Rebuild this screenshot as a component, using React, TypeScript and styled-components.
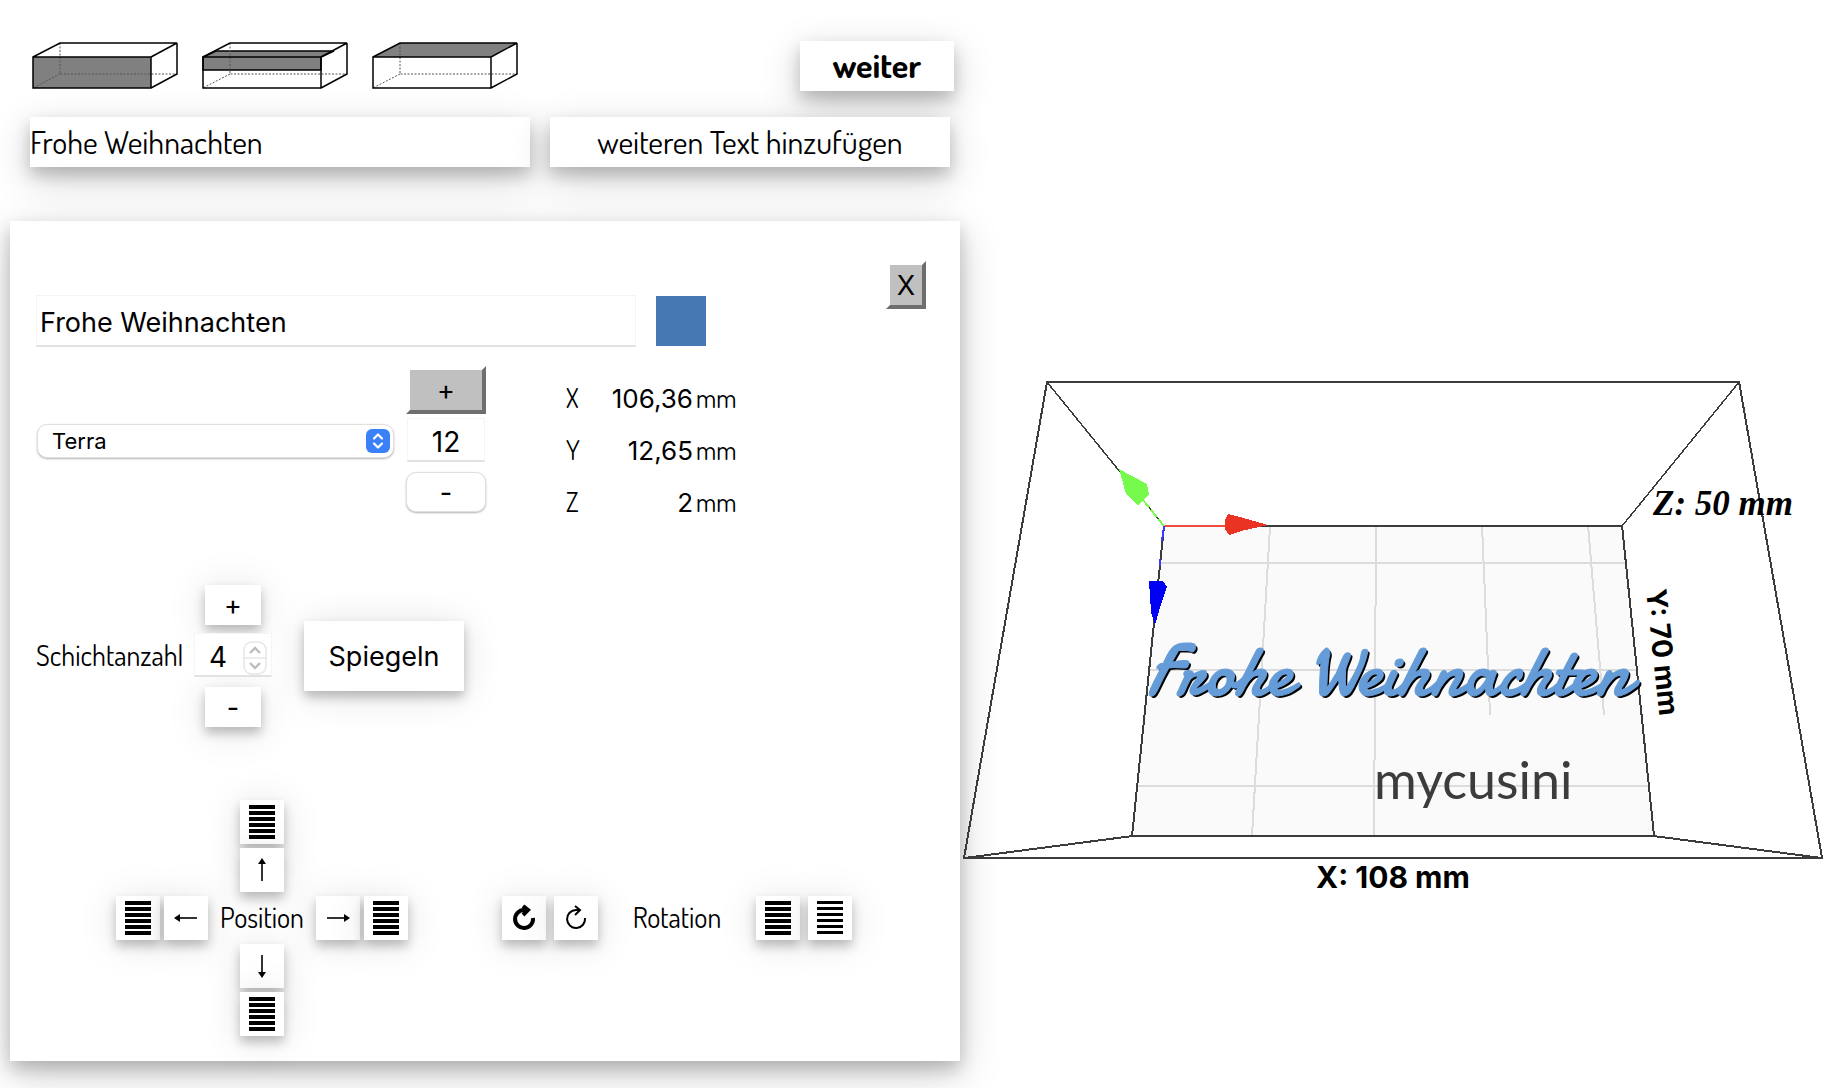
import React, { useState } from "react";
import styled, { createGlobalStyle, css } from "styled-components";

const display = `"Dosis", "Liberation Sans Narrow", "Lato", sans-serif`;
const system = `"Inter", "Liberation Sans", sans-serif`;
const script = `"Damion", "Yellowtail", "Kaushan Script", "Dancing Script", "Pacifico", "Satisfy", "Caveat", "Liberation Serif", serif`;
const wideShadow = "0 8px 16px rgba(0, 0, 0, 0.2), 0 12px 40px rgba(0, 0, 0, 0.19)";
const tightShadow = "0 6px 10px rgba(0, 0, 0, 0.24), 0 4px 40px rgba(0, 0, 0, 0.12)";

const GlobalStyle = createGlobalStyle`
  *, *::before, *::after { box-sizing: border-box; }
  body { margin: 0; background: #fff; color: #000; font-family: ${display}; }
  button, input, select { margin: 0; color: #000; }
  button { cursor: pointer; }
`;

const Page = styled.div`
  display: grid;
  grid-template-columns: minmax(0, 26fr) minmax(0, 24fr);
  align-items: start;
`;

const Editor = styled.main`
  padding: 41px 0 27px 10px;
`;

const Bar = styled.div`
  display: flex;
  align-items: flex-start;
  height: 50px;
  padding: 0 6px 0 20px;
`;

const Placements = styled.div`
  display: flex;
  gap: 22px;
`;

const PlacementButton = styled.button`
  width: 148px;
  height: 50px;
  padding: 0;
  border: 0;
  background: transparent;
  svg { display: block; }
`;

const FlatButton = styled.button`
  height: 50px;
  padding: 0 32px;
  border: 0;
  background: #fff;
  box-shadow: ${wideShadow};
  font: 400 32px/40px ${display};
`;

const NextButton = styled(FlatButton)`
  min-width: 154px;
  margin-left: auto;
  padding: 0 0 2px;
  font-weight: 700;
  font-size: 34px;
`;

const TextBar = styled.div`
  display: grid;
  grid-template-columns: 5fr 4fr;
  gap: 20px;
  margin: 26px 10px 54px 20px;
`;

const TextEntry = styled.input`
  min-width: 0;
  height: 50px;
  padding: 0 0 2px;
  border: 0;
  background: #fff;
  box-shadow: ${wideShadow};
  font: 400 32px/40px ${display};
`;

const Panel = styled.section`
  position: relative;
  padding: 40px 34px 25px 26px;
  background: #fff;
  box-shadow: ${wideShadow};
`;

const HeadRow = styled.div`
  display: flex;
  align-items: flex-start;
  gap: 20px;
  margin-bottom: 19px;
`;

const fieldBorder = css`
  border: 1px solid #f5f5f5;
  border-bottom: 2px solid #e2e2e2;
  background: #fff;
`;

const NameField = styled.input`
  flex: 0 1 600px;
  min-width: 0;
  height: 52px;
  margin-top: 34px;
  padding: 3px 3px 0;
  ${fieldBorder}
  font: 400 27px/36px ${system};
`;

const Swatch = styled.input`
  appearance: none;
  width: 50px;
  height: 50px;
  margin-top: 35px;
  padding: 0;
  border: 0;
  background: #4679b3;
  &::-webkit-color-swatch-wrapper { padding: 0; }
  &::-webkit-color-swatch { border: 0; border-radius: 0; }
`;

const RaisedButton = styled.button<{ $width: number }>`
  width: ${(p) => p.$width}px;
  height: 48px;
  padding: 2px 0 0;
  border: 4px solid;
  border-color: #fff #6e6e6e #6e6e6e #fff;
  background: #c0c0c0;
  font: 400 27px/32px ${system};
`;

const CloseButton = styled(RaisedButton)`
  margin-left: auto;
`;

const FontRow = styled.div`
  display: flex;
  align-items: flex-start;
  margin-bottom: 68px;
`;

const SelectBox = styled.div`
  position: relative;
  width: 357px;
  margin: 58px 12px 0 1px;
  svg {
    position: absolute;
    top: 5px;
    right: 4px;
    pointer-events: none;
  }
`;

const FontSelect = styled.select`
  appearance: none;
  display: block;
  width: 100%;
  height: 34px;
  padding: 0 40px 0 14px;
  border: 1px solid #e0e0e0;
  border-radius: 10px;
  background: #fff;
  box-shadow: 0 1px 2px rgba(0, 0, 0, 0.3);
  font: 400 22px/28px ${system};
`;

const Stepper = styled.div<{ $gap: number; $width: number }>`
  display: flex;
  flex-direction: column;
  align-items: center;
  width: ${(p) => p.$width}px;
  & > :nth-child(2) { margin: ${(p) => p.$gap}px 0 10px; }
`;

const NumberBox = styled.div`
  position: relative;
  width: 78px;
  svg {
    position: absolute;
    top: 8px;
    right: 5px;
    pointer-events: none;
  }
`;

const NumberField = styled.input<{ $spinner?: boolean }>`
  appearance: textfield;
  display: block;
  width: 78px;
  height: 44px;
  padding: ${(p) => (p.$spinner ? "4px 30px 0 0" : "4px 0 0")};
  ${fieldBorder}
  font: 400 28px/36px ${system};
  text-align: center;
  &::-webkit-inner-spin-button { display: none; }
`;

const RoundButton = styled.button`
  width: 80px;
  height: 40px;
  padding: 2px 0 0;
  border: 1px solid #e0e0e0;
  border-radius: 10px;
  background: #fff;
  box-shadow: 0 1px 2px rgba(0, 0, 0, 0.3);
  font: 400 27px/32px ${system};
`;

const Dimensions = styled.div`
  display: grid;
  gap: 20px;
  padding: 15px 0 0 80px;
`;

const Dimension = styled.label`
  display: grid;
  grid-template-columns: 26px 100px auto;
  column-gap: 2px;
  align-items: center;
  height: 32px;
  font: 400 26px/32px ${display};
`;

const DimensionValue = styled.input`
  width: 100px;
  padding: 2px 1px 0 0;
  border: 0;
  background: transparent;
  font: 400 26px/32px ${system};
  text-align: right;
`;

const LayerRow = styled.div`
  display: flex;
  align-items: center;
  margin-bottom: 73px;
`;

const LayerLabel = styled.label`
  flex: 0 0 158px;
  padding-bottom: 2px;
  font: 400 28px/36px ${display};
  white-space: nowrap;
`;

const ShadowButton = styled.button<{ $width: number; $height: number }>`
  width: ${(p) => p.$width}px;
  height: ${(p) => p.$height}px;
  padding: 2px 0 0;
  border: 0;
  background: #fff;
  box-shadow: ${tightShadow};
  font: 400 27px/32px ${system};
`;

const MirrorButton = styled(ShadowButton)`
  margin-left: 32px;
`;

const MoveRow = styled.div`
  display: flex;
  align-items: center;
  gap: 94px;
  padding-left: 80px;
`;

const Pad = styled.div`
  display: grid;
  grid-template-columns: 44px 44px 100px 44px 44px;
  grid-template-rows: repeat(5, 44px);
  gap: 4px;
  place-items: center;
`;

const PadLabel = styled.span`
  grid-area: 3 / 3;
  padding-bottom: 2px;
  font: 400 28px/36px ${display};
`;

const IconButton = styled.button<{ $area?: string }>`
  ${(p) => p.$area && `grid-area: ${p.$area};`}
  width: 44px;
  height: 44px;
  padding: 0;
  border: 0;
  background: #fff;
  box-shadow: ${tightShadow};
  svg { display: block; }
`;

const RotationRow = styled.div`
  display: flex;
  gap: 8px;
  align-items: center;
`;

const RotationLabel = styled.span`
  width: 142px;
  padding-bottom: 2px;
  font: 400 28px/36px ${display};
  text-align: center;
`;

const Scene = styled.svg`
  display: block;
  width: 100%;
  height: auto;
  position: relative;
`;

type Side = "front" | "middle" | "top";

function BoxIcon({ side }: { side: Side }) {
  return (
    <svg width="148" height="50" viewBox="0 0 148 50" fill="none" stroke="#000" strokeWidth="1.5">
      {side === "front" && <path d="M3 16H121V47H3Z" fill="#808080" stroke="none" />}
      {side === "middle" && <path d="M3 16L16 10H134L121 16V29H3Z" fill="#808080" />}
      {side === "top" && <path d="M3 16L30 2H147L121 16Z" fill="#808080" stroke="none" />}
      <path d="M30 2V33H147M30 33L3 47" strokeWidth="1" stroke="#555" strokeDasharray="2 1.5" />
      <path d="M3 16H121V47H3ZM3 16L30 2H147L121 16M147 2V33L121 47" />
    </svg>
  );
}

function Stripes({ thickness = 4 }: { thickness?: number }) {
  return (
    <svg width="44" height="44" viewBox="0 0 44 44" shapeRendering="crispEdges">
      {[5, 11, 17, 23, 29, 35].map((y) => (
        <rect key={y} x="9" y={y} width="26" height={thickness} />
      ))}
    </svg>
  );
}

function Arrow({ angle }: { angle: number }) {
  return (
    <svg width="44" height="44" viewBox="0 0 44 44">
      <g transform={`rotate(${angle} 22 22)`}>
        <path d="M11 22H30" stroke="#000" strokeWidth="1.6" />
        <path d="M28 18L34 22L28 26Z" />
      </g>
    </svg>
  );
}

function Turn({ weight }: { weight: number }) {
  return (
    <svg width="44" height="44" viewBox="0 0 44 44" fill="none" stroke="#000" strokeWidth={weight}>
      <path d="M31 22A9 9 0 1 1 22 14H26" />
      <path d="M21 10L26 14L21 19" />
    </svg>
  );
}

const floorLines = [
  "M1161 563H1626",
  "M1149 670H1637",
  "M1138 786H1649",
  "M1270 526L1252 835",
  "M1376 526L1374 835",
  "M1482 526L1490 715",
  "M1588 526L1604 715",
];

const dimensions = [
  { axis: "X", value: "106,36" },
  { axis: "Y", value: "12,65" },
  { axis: "Z", value: "2" },
];

function Preview() {
  return (
    <Scene viewBox="960 0 886 1088" role="img" aria-label="Vorschau">
      <path d="M1164 526H1622L1654 836H1132Z" fill="#fafafa" />
      <g fill="none" strokeWidth="2" shapeRendering="crispEdges">
        <g stroke="#dcdcdc">
          {floorLines.map((d) => (
            <path key={d} d={d} />
          ))}
        </g>
        <g stroke="#3c3c3c">
          <path d="M1047 382H1739L1822 858H964Z" />
          <path d="M1164 526H1622L1654 836H1132Z" />
          <path d="M964 858L1132 836M1822 858L1654 836" />
          <path d="M1047 382L1164 526M1739 382L1622 526" strokeWidth="1.5" />
        </g>
        <path d="M1164 526H1228" stroke="#f04a3e" />
        <path d="M1164 526L1143 500" stroke="#76fb4c" strokeDasharray="9 3" />
        <path d="M1164 526L1162 541M1160 559L1160 566" stroke="#3a3aff" />
      </g>
      <g shapeRendering="crispEdges">
        <path d="M1225 520L1228 514L1240 517L1268 525L1241 531L1229 535L1225 529Z" fill="#ea3323" />
        <path d="M1119 469L1147 484L1149 494L1138 505L1126 494L1123 483Z" fill="#76fb4c" />
        <path d="M1149 581H1163L1167 587L1161 604L1155 625L1151 612Z" fill="#0000f5" />
      </g>
      <g fontFamily={script} fontSize="72">
        <text x="1149" y="697" fill="#000">Frohe Weihnachten</text>
        <text x="1147" y="695" fill="#659cd8" stroke="#659cd8" strokeWidth="1">Frohe Weihnachten</text>
      </g>
      <text x="1374" y="799" fill="#3c3c3c" fontFamily="Lato, sans-serif" fontSize="52" fontWeight="400">
        mycusini
      </text>
      <text x="1316" y="888" fontFamily="Inter, sans-serif" fontSize="30" fontWeight="700">
        X: 108 mm
      </text>
      <text x="1653" y="515" fontFamily='"Liberation Serif", serif' fontSize="35" fontWeight="700" fontStyle="italic">
        Z: 50 mm
      </text>
      <text transform="translate(1646 590) rotate(84)" fontFamily="Inter, sans-serif" fontSize="28" fontWeight="700">
        Y: 70 mm
      </text>
    </Scene>
  );
}

export default function App() {
  const [text, setText] = useState("Frohe Weihnachten");
  const [size, setSize] = useState(12);
  const [layers, setLayers] = useState(4);

  return (
    <>
      <GlobalStyle />
      <Page>
        <Editor>
          <Bar>
            <Placements>
              <PlacementButton aria-label="Vorne"><BoxIcon side="front" /></PlacementButton>
              <PlacementButton aria-label="Mitte"><BoxIcon side="middle" /></PlacementButton>
              <PlacementButton aria-label="Oben"><BoxIcon side="top" /></PlacementButton>
            </Placements>
            <NextButton>weiter</NextButton>
          </Bar>
          <TextBar>
            <TextEntry aria-label="Text" value={text} onChange={(e) => setText(e.target.value)} />
            <FlatButton>weiteren Text hinzufügen</FlatButton>
          </TextBar>

          <Panel>
            <HeadRow>
              <NameField aria-label="Textinhalt" value={text} onChange={(e) => setText(e.target.value)} />
              <Swatch type="color" aria-label="Farbe" defaultValue="#4679b3" />
              <CloseButton $width={40}>X</CloseButton>
            </HeadRow>

            <FontRow>
              <SelectBox>
                <FontSelect aria-label="Schriftart" defaultValue="Terra">
                  <option>Terra</option>
                </FontSelect>
                <svg width="24" height="24" viewBox="0 0 24 24">
                  <rect width="24" height="24" rx="6" fill="#3a80f7" />
                  <path d="M8 9.500L12 5.500L16 9.500M8 14.500L12 18.500L16 14.500" fill="none" stroke="#fff" strokeWidth="2.200" strokeLinecap="round" strokeLinejoin="round" />
                </svg>
              </SelectBox>
              <Stepper $gap={4} $width={80}>
                <RaisedButton $width={80} onClick={() => setSize(size + 1)}>+</RaisedButton>
                <NumberField aria-label="Schriftgröße" value={size} onChange={(e) => setSize(Number(e.target.value))} />
                <RoundButton onClick={() => setSize(size - 1)}>-</RoundButton>
              </Stepper>
              <Dimensions>
                {dimensions.map((d) => (
                  <Dimension key={d.axis}>
                    <span>{d.axis}</span>
                    <DimensionValue readOnly value={d.value} />
                    <span>mm</span>
                  </Dimension>
                ))}
              </Dimensions>
            </FontRow>

            <LayerRow>
              <LayerLabel htmlFor="layers">Schichtanzahl</LayerLabel>
              <Stepper $gap={8} $width={78}>
                <ShadowButton $width={56} $height={40} onClick={() => setLayers(layers + 1)}>+</ShadowButton>
                <NumberBox>
                  <NumberField id="layers" type="number" $spinner value={layers} onChange={(e) => setLayers(Number(e.target.value))} />
                  <svg width="24" height="34" viewBox="0 0 24 34" fill="none">
                    <rect x="1" y="1" width="22" height="32" rx="8" fill="#fff" stroke="#e6e6e6" strokeWidth="1.500" />
                    <path d="M1 17H23" stroke="#e6e6e6" strokeWidth="1.500" />
                    <path d="M7 12L12 7L17 12M7 22L12 27L17 22" stroke="#bdbdbd" strokeWidth="2.400" />
                  </svg>
                </NumberBox>
                <ShadowButton $width={56} $height={40} onClick={() => setLayers(layers - 1)}>-</ShadowButton>
              </Stepper>
              <MirrorButton $width={160} $height={70}>Spiegeln</MirrorButton>
            </LayerRow>

            <MoveRow>
              <Pad>
                <IconButton $area="1 / 3" aria-label="Ganz nach oben"><Stripes /></IconButton>
                <IconButton $area="2 / 3" aria-label="Nach oben"><Arrow angle={-90} /></IconButton>
                <IconButton $area="3 / 1" aria-label="Ganz nach links"><Stripes /></IconButton>
                <IconButton $area="3 / 2" aria-label="Nach links"><Arrow angle={180} /></IconButton>
                <PadLabel>Position</PadLabel>
                <IconButton $area="3 / 4" aria-label="Nach rechts"><Arrow angle={0} /></IconButton>
                <IconButton $area="3 / 5" aria-label="Ganz nach rechts"><Stripes /></IconButton>
                <IconButton $area="4 / 3" aria-label="Nach unten"><Arrow angle={90} /></IconButton>
                <IconButton $area="5 / 3" aria-label="Ganz nach unten"><Stripes /></IconButton>
              </Pad>
              <RotationRow>
                <IconButton aria-label="Schnell drehen"><Turn weight={4} /></IconButton>
                <IconButton aria-label="Drehen"><Turn weight={2} /></IconButton>
                <RotationLabel>Rotation</RotationLabel>
                <IconButton aria-label="Grob"><Stripes /></IconButton>
                <IconButton aria-label="Fein"><Stripes thickness={3} /></IconButton>
              </RotationRow>
            </MoveRow>
          </Panel>
        </Editor>
        <Preview />
      </Page>
    </>
  );
}
